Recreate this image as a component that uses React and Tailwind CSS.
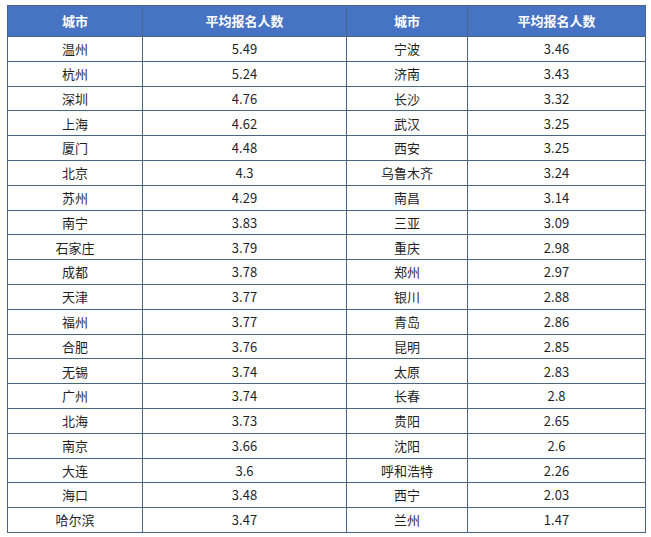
import React from 'react'

const left = [
    ['温州', '5.49'], ['杭州', '5.24'], ['深圳', '4.76'], ['上海', '4.62'], ['厦门', '4.48'],
    ['北京', '4.3'], ['苏州', '4.29'], ['南宁', '3.83'], ['石家庄', '3.79'], ['成都', '3.78'],
    ['天津', '3.77'], ['福州', '3.77'], ['合肥', '3.76'], ['无锡', '3.74'], ['广州', '3.74'],
    ['北海', '3.73'], ['南京', '3.66'], ['大连', '3.6'], ['海口', '3.48'], ['哈尔滨', '3.47'],
]

const right = [
    ['宁波', '3.46'], ['济南', '3.43'], ['长沙', '3.32'], ['武汉', '3.25'], ['西安', '3.25'],
    ['乌鲁木齐', '3.24'], ['南昌', '3.14'], ['三亚', '3.09'], ['重庆', '2.98'], ['郑州', '2.97'],
    ['银川', '2.88'], ['青岛', '2.86'], ['昆明', '2.85'], ['太原', '2.83'], ['长春', '2.8'],
    ['贵阳', '2.65'], ['沈阳', '2.6'], ['呼和浩特', '2.26'], ['西宁', '2.03'], ['兰州', '1.47'],
]

const App = () => {
    const th = 'border border-[#4b6681] font-bold text-white text-center'
    const td = 'border border-[#4b6681] text-center'

    return (
        <div
            className="bg-white w-[651px] h-[537px] pt-[5px] pl-[7px] text-[13px] text-[#1f1f1f]"
            style={{ fontFamily: '"Microsoft YaHei", "Noto Sans CJK SC", sans-serif' }}
        >
            <table className="table-fixed border-collapse w-[638px]">
                <colgroup>
                    <col className="w-[135px]" />
                    <col className="w-[204px]" />
                    <col className="w-[121px]" />
                    <col className="w-[178px]" />
                </colgroup>
                <thead>
                    <tr className="h-[31px] bg-[#4673c4]">
                        <th className={th}>城市</th>
                        <th className={th}>平均报名人数</th>
                        <th className={th}>城市</th>
                        <th className={th}>平均报名人数</th>
                    </tr>
                </thead>
                <tbody>
                    {left.map((row, i) => (
                        <tr key={i} className="h-[24.8px]">
                            <td className={td}>{row[0]}</td>
                            <td className={td}>{row[1]}</td>
                            <td className={td}>{right[i][0]}</td>
                            <td className={td}>{right[i][1]}</td>
                        </tr>
                    ))}
                </tbody>
            </table>
        </div>
    )
}

export default App
